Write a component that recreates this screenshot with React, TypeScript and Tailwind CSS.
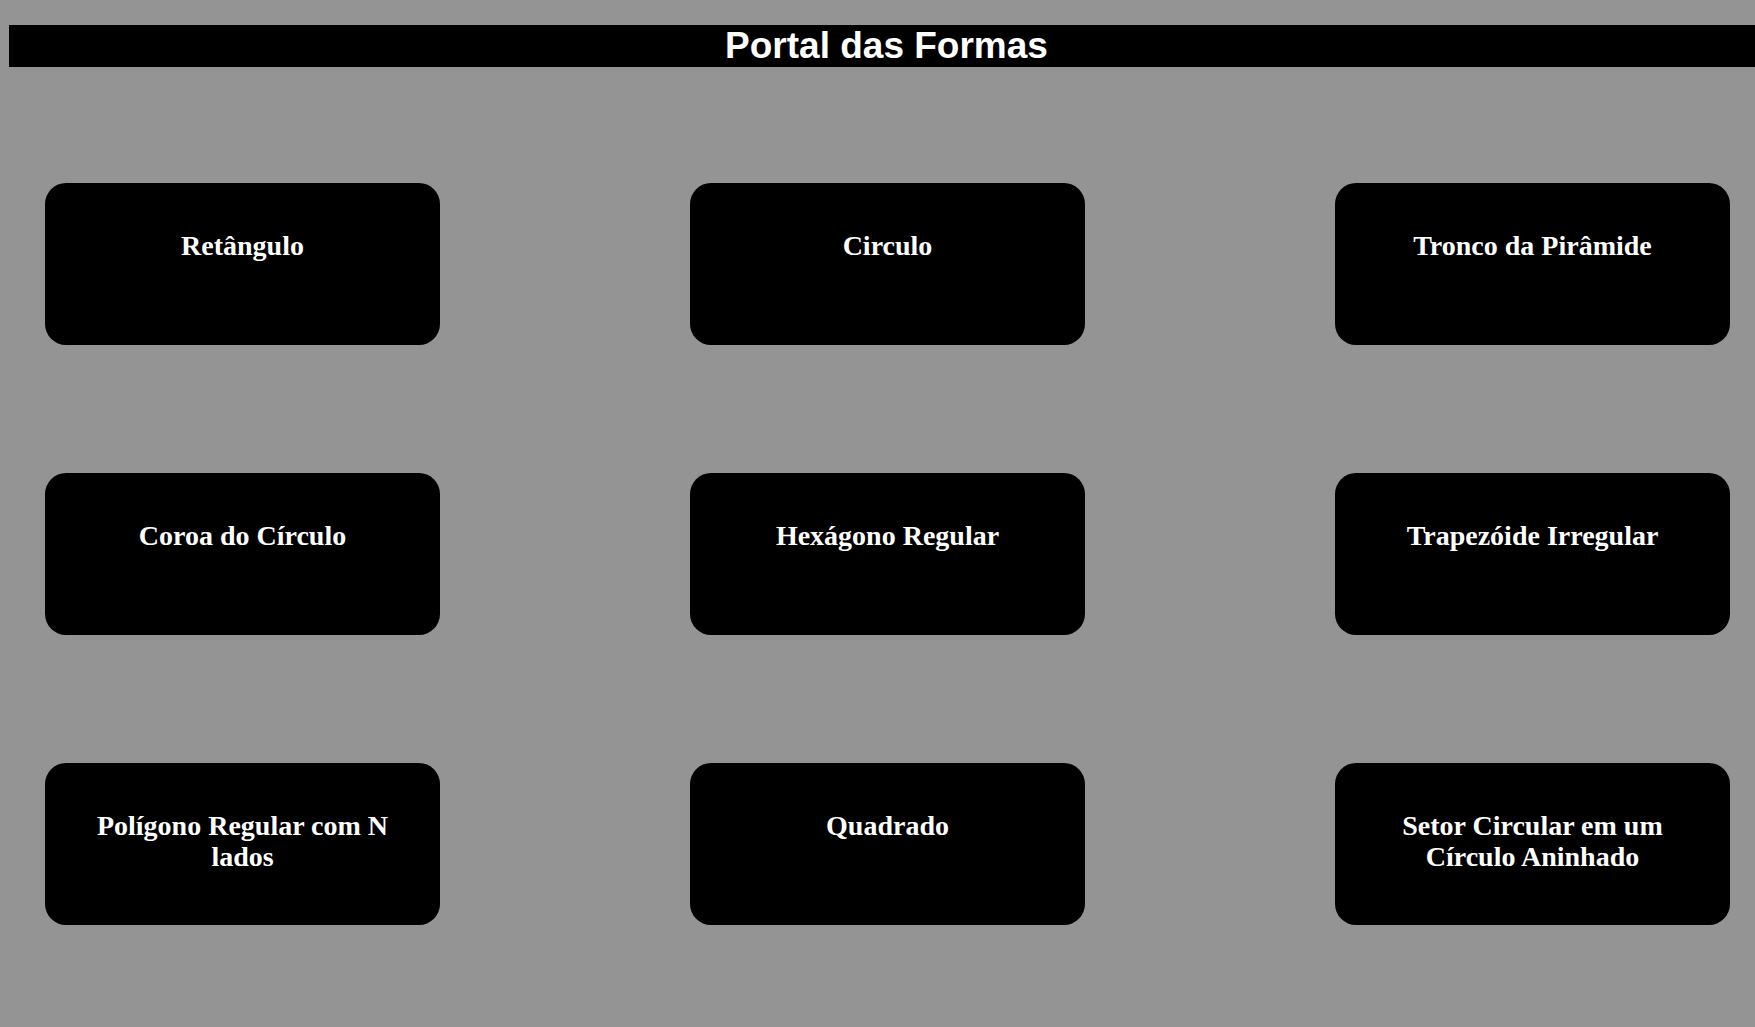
import React from "react";

const shapes: string[] = [
  "Retângulo",
  "Circulo",
  "Tronco da Pirâmide",
  "Coroa do Círculo",
  "Hexágono Regular",
  "Trapezóide Irregular",
  "Polígono Regular com N lados",
  "Quadrado",
  "Setor Circular em um Círculo Aninhado",
];

const ShapeCard: React.FC<{ title: string }> = ({ title }) => (
  <div className="h-[162px] rounded-[21px] bg-black px-[40px] pt-[47px] text-center">
    <h2 className="font-['Liberation_Serif','Times_New_Roman',serif] text-[28px] font-bold leading-[31px] text-white">
      {title}
    </h2>
  </div>
);

const App: React.FC = () => {
  return (
    <div className="min-h-screen w-full overflow-hidden bg-[#949494] pt-[25px]">
      {/* Header bar */}
      <header className="ml-[9px] h-[42px] w-full bg-black">
        <h1 className="text-center font-['Liberation_Sans',Arial,sans-serif] text-[37px] font-bold leading-[42px] text-white">
          Portal das Formas
        </h1>
      </header>

      {/* Shapes grid */}
      <main className="mt-[116px] grid grid-cols-[395px_395px_395px] gap-x-[250px] gap-y-[128px] pl-[45px]">
        {shapes.map((s) => (
          <ShapeCard key={s} title={s} />
        ))}
      </main>
    </div>
  );
};

export default App;
